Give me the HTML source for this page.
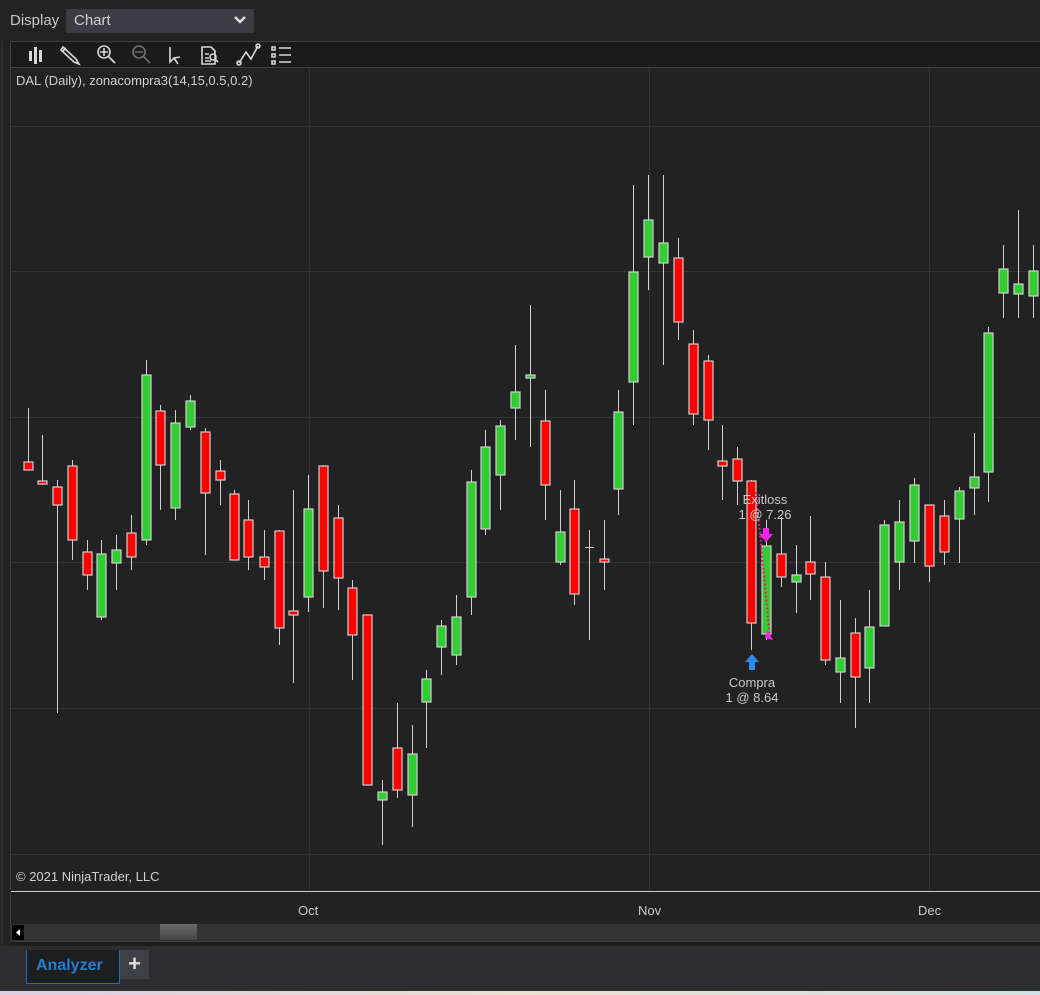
<!DOCTYPE html>
<html><head><meta charset="utf-8">
<style>
*{margin:0;padding:0;box-sizing:border-box}
body{width:1040px;height:995px;background:#232323;font-family:"Liberation Sans",sans-serif;position:relative;overflow:hidden}
.abs{position:absolute}
</style></head><body>
<div class="abs" style="left:10px;top:12px;color:#c8c8c8;font-size:15px">Display</div>
<div class="abs" style="left:66px;top:9px;width:188px;height:24px;background:#3c3c42;color:#d0d0d0;font-size:15px;padding:3px 8px">Chart
<svg class="abs" style="left:168px;top:6px" width="12" height="10"><path d="M1 2 L6 7 L11 2" stroke="#e0e0e0" stroke-width="2.4" fill="none"/></svg></div>
<!-- chart panel frame -->
<div class="abs" style="left:1px;top:41px;width:1040px;height:904px;border-left:2px solid #2f2f2f"></div>
<div class="abs" style="left:10px;top:41px;width:1030px;height:27px;background:#1b1b1b;border-top:1px solid #404040;border-bottom:1px solid #404040;border-left:1px solid #404040"></div>
<svg class="abs" style="left:20px;top:42px" width="280" height="25" stroke="#d8d8d8" fill="none" stroke-width="1.6">
<g fill="#d8d8d8" stroke="none"><rect x="9" y="9" width="3" height="10"/><rect x="14" y="5" width="3" height="17"/><rect x="19" y="8" width="3" height="12"/></g>
<path d="M43 5 L56 17 L59 22 L54 20 L41 8 Z M43 9 L46 6"/>
<circle cx="84" cy="10" r="6"/><path d="M80 10h8M84 6v8M88 14l7 7" /><circle cx="119" cy="10" r="6" stroke="#707070"/><path d="M115 10h8M123 14l7 7" stroke="#707070"/>
<path d="M150 5 L150 20 L154 16 L158 22 M154 16 L160 15 Z"/>
<path d="M182 5h9l4 4v13h-13z M185 12h4M185 16h4M185 19h6"/><circle cx="193" cy="15" r="3"/><path d="M195 17l3 3"/>
<path d="M219 21 L226 10 L231 17 L238 4"/><circle cx="219" cy="21" r="2"/><circle cx="238" cy="4" r="2"/>
<path d="M252 5h3v3h-3zM252 12h3v3h-3zM252 19h3v3h-3zM259 6h12M259 13h12M259 20h12"/>
</svg>
<div class="abs" style="left:10px;top:68px;width:1030px;height:822px;background:#222222;border-left:1px solid #404040"></div>
<svg class="abs" style="left:0;top:0" width="1040" height="995" id="ch">
<g stroke="#333" stroke-width="1">
<line x1="11" y1="126.5" x2="1040" y2="126.5"/><line x1="11" y1="271.5" x2="1040" y2="271.5"/><line x1="11" y1="417.5" x2="1040" y2="417.5"/><line x1="11" y1="562.5" x2="1040" y2="562.5"/><line x1="11" y1="708.5" x2="1040" y2="708.5"/><line x1="11" y1="854.5" x2="1040" y2="854.5"/>
<line x1="309.5" y1="68" x2="309.5" y2="890"/><line x1="649.5" y1="68" x2="649.5" y2="890"/><line x1="929.5" y1="68" x2="929.5" y2="890"/>
</g>
<line x1="11" y1="891.5" x2="1040" y2="891.5" stroke="#d0d0d0"/>
<g stroke="#d0d0d0"><line x1="309.5" y1="892" x2="309.5" y2="896"/><line x1="649.5" y1="892" x2="649.5" y2="896"/><line x1="929.5" y1="892" x2="929.5" y2="896"/></g>
<g id="cs"></g>
<path d="M756 492 L770 638" stroke="#e8206a" stroke-width="2" stroke-dasharray="2 2"/>
<path d="M763 528h6v6h4l-7 8l-7-8h4z" fill="#ff20ff"/>
<path d="M767 630 L773 640 L765 638 Z" fill="#ff20ff"/>
<path d="M749 670v-8h-4l7-8l7 8h-4v8z" fill="#2a8cf0"/>
</svg>
<div class="abs" style="left:16px;top:73px;color:#d0d0d0;font-size:13px">DAL (Daily), zonacompra3(14,15,0.5,0.2)</div>
<div class="abs" style="left:720px;top:492px;width:90px;text-align:center;color:#c8c8c8;font-size:13px;line-height:15px">Exitloss<br>1 @ 7.26</div>
<div class="abs" style="left:707px;top:675px;width:90px;text-align:center;color:#c8c8c8;font-size:13px;line-height:15px">Compra<br>1 @ 8.64</div>
<div class="abs" style="left:16px;top:869px;color:#d0d0d0;font-size:13px">© 2021 NinjaTrader, LLC</div>
<div class="abs" style="left:10px;top:892px;width:1030px;height:32px;background:#222;border-left:1px solid #404040"></div>
<div class="abs" style="left:298px;top:903px;color:#c8c8c8;font-size:13px">Oct</div>
<div class="abs" style="left:638px;top:903px;color:#c8c8c8;font-size:13px">Nov</div>
<div class="abs" style="left:918px;top:903px;color:#c8c8c8;font-size:13px">Dec</div>
<div class="abs" style="left:10px;top:924px;width:1030px;height:17px;background:#333"></div>
<div class="abs" style="left:12px;top:925px;width:12px;height:15px;background:#000"><svg width="12" height="15"><path d="M4 7.5L8 4V11Z" fill="#fff"/></svg></div>
<div class="abs" style="left:160px;top:924px;width:37px;height:16px;background:linear-gradient(#6a6a6a,#444)"></div>
<div class="abs" style="left:10px;top:941px;width:1030px;height:5px;background:#1e1e1e;border-top:1px solid #3a3a3a"></div>
<div class="abs" style="left:0;top:946px;width:1040px;height:45px;background:#2d2d30"></div>
<div class="abs" style="left:26px;top:950px;width:94px;height:34px;background:#1e1e1e;border:1px solid #1a6fbf;border-top:none;color:#1f7fd6;font-weight:bold;font-size:16px;padding:7px 0 0 9px">Analyzer</div>
<div class="abs" style="left:120px;top:950px;width:29px;height:29px;background:#3f3f46;color:#ddd;font-size:22px;text-align:center;line-height:28px;font-weight:bold">+</div>
<div class="abs" style="left:0;top:991px;width:1040px;height:4px;background:linear-gradient(90deg,#d8d0e0,#e8e0d0,#d0e0e0)"></div>
<script>
var d=[[28,408,470,462,470,0],[42,435,485,481,484,0],[57,480,713,487,505,0],[72,460,560,466,540,0],[87,540,590,552,575,0],[101,540,620,554,617,1],[116,535,590,550,563,1],[131,515,570,533,557,0],[146,360,545,375,540,1],[160,405,510,411,465,0],[175,410,520,423,508,1],[190,395,430,401,427,1],[205,428,555,432,493,0],[220,460,505,471,480,0],[234,490,560,494,560,0],[248,500,570,520,557,0],[264,530,580,557,567,0],[279,530,645,531,628,0],[293,490,683,611,615,0],[308,475,612,509,597,1],[323,465,608,466,571,0],[338,505,610,518,578,0],[352,580,680,588,635,0],[367,615,785,615,785,0],[382,780,845,792,800,1],[397,703,798,748,790,0],[412,725,827,754,795,1],[426,670,748,679,702,1],[441,620,675,626,647,1],[456,595,665,617,655,1],[471,470,615,482,597,1],[485,430,535,447,529,1],[500,420,510,426,475,1],[515,345,440,392,408,1],[530,305,447,375,377,1],[545,390,520,421,485,0],[560,490,565,532,562,1],[574,480,605,509,594,0],[589,530,640,547,548,2],[604,520,590,559,562,0],[618,390,515,412,489,1],[633,185,425,272,382,1],[648,175,290,220,257,1],[663,175,365,243,263,1],[678,238,340,258,322,0],[693,330,425,344,414,0],[708,355,450,361,420,0],[722,425,500,461,466,0],[737,447,505,459,481,0],[751,480,650,481,623,0],[766,520,640,546,634,1],[781,517,587,554,577,0],[796,545,613,575,582,1],[810,516,600,562,574,0],[825,562,665,577,660,0],[840,600,703,658,672,1],[855,618,728,633,677,0],[869,590,703,627,668,1],[884,520,626,525,626,1],[899,500,590,522,562,1],[914,478,563,485,541,1],[929,505,582,505,566,0],[944,500,565,516,552,0],[959,487,563,491,519,1],[974,433,515,477,488,1],[988,327,502,333,472,1],[1003,245,318,269,293,1],[1018,210,318,284,294,1],[1033,245,318,271,296,1]];
var s='';d.forEach(function(c){var x=c[0];s+='<line x1="'+(x+.5)+'" y1="'+c[1]+'" x2="'+(x+.5)+'" y2="'+c[2]+'" stroke="#d0d0d0" stroke-width="1"/>';
if(c[5]==2){s+='<line x1="'+(x-4)+'" y1="'+c[3]+'.5" x2="'+(x+5)+'" y2="'+c[3]+'.5" stroke="#d0d0d0"/>';}
else{s+='<rect x="'+(x-4)+'" y="'+c[3]+'" width="9" height="'+Math.max(3,c[4]-c[3])+'" fill="'+(c[5]?'#32cd32':'#ff0000')+'" stroke="#d0d0d0" stroke-width="1.2"/>';}});
document.getElementById('cs').innerHTML=s;
</script>
</body></html>
